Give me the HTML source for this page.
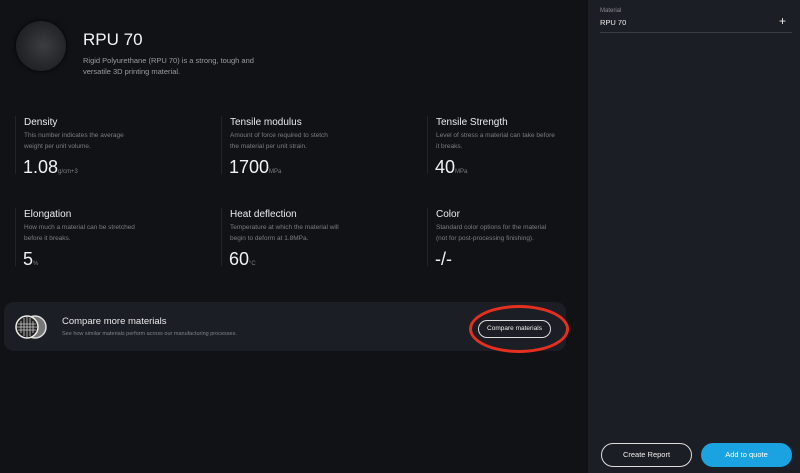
<!DOCTYPE html>
<html><head><style>
*{margin:0;padding:0;box-sizing:border-box}
body{width:800px;height:473px;background:#111216;font-family:"Liberation Sans",sans-serif;color:#e8e8ea;position:relative;overflow:hidden}
.a{position:absolute}
.sph{left:16px;top:21px;width:50px;height:50px;border-radius:50%;background:radial-gradient(circle at 55% 50%,#3c3d40,#26272a 55%,#18191b);box-shadow:0 0 4px #000}
.t{font-size:10px;color:#ececee}
.d{font-size:6.5px;color:#7a7d83;line-height:11px}
.v{font-size:18px;color:#f2f2f4;font-weight:300}
.v small{font-size:6px;color:#7a7d83}
.ln{width:1px;background:#222429}
</style></head><body>
<div class="a sph"></div>
<div class="a" style="left:83px;top:30px;font-size:17px;color:#f4f4f6">RPU 70</div>
<div class="a" style="left:83px;top:55px;font-size:7.5px;color:#9a9ca2;line-height:11px">Rigid Polyurethane (RPU 70) is a strong, tough and<br>versatile 3D printing material.</div>

<div class="a ln" style="left:15px;top:116px;height:58px"></div>
<div class="a ln" style="left:221px;top:116px;height:58px"></div>
<div class="a ln" style="left:427px;top:116px;height:58px"></div>
<div class="a ln" style="left:15px;top:208px;height:58px"></div>
<div class="a ln" style="left:221px;top:208px;height:58px"></div>
<div class="a ln" style="left:427px;top:208px;height:58px"></div>

<div class="a t" style="left:24px;top:117px">Density</div>
<div class="a d" style="left:24px;top:130px">This number indicates the average<br>weight per unit volume.</div>
<div class="a v" style="left:23px;top:157px">1.08<small>g/cm+3</small></div>
<div class="a t" style="left:230px;top:117px">Tensile modulus</div>
<div class="a d" style="left:230px;top:130px">Amount of force required to stetch<br>the material per unit strain.</div>
<div class="a v" style="left:229px;top:157px">1700<small>MPa</small></div>
<div class="a t" style="left:436px;top:117px">Tensile Strength</div>
<div class="a d" style="left:436px;top:130px">Level of stress a material can take before<br>it breaks.</div>
<div class="a v" style="left:435px;top:157px">40<small>MPa</small></div>

<div class="a t" style="left:24px;top:209px">Elongation</div>
<div class="a d" style="left:24px;top:222px">How much a material can be stretched<br>before it breaks.</div>
<div class="a v" style="left:23px;top:249px">5<small>%</small></div>
<div class="a t" style="left:230px;top:209px">Heat deflection</div>
<div class="a d" style="left:230px;top:222px">Temperature at which the material will<br>begin to deform at 1.8MPa.</div>
<div class="a v" style="left:229px;top:249px">60<small>°C</small></div>
<div class="a t" style="left:436px;top:209px">Color</div>
<div class="a d" style="left:436px;top:222px">Standard color options for the material<br>(not for post-processing finishing).</div>
<div class="a v" style="left:435px;top:249px">-/-</div>

<div class="a" style="left:4px;top:302px;width:562px;height:49px;background:#1b1e24;border-radius:10px"></div>
<svg class="a" style="left:14px;top:314px" width="34" height="26"><circle cx="21" cy="13" r="11" fill="#777" stroke="#ddd" stroke-width="1.5"/><circle cx="13" cy="13" r="11" fill="#222" stroke="#eee" stroke-width="1.5"/><g stroke="#ccc" stroke-width=".8"><path d="M7 7v12M10 4v18M13 3v20M16 4v18M19 7v12M4 10h18M3 13h20M4 16h18"/></g></svg>
<div class="a" style="left:62px;top:316px;font-size:9.5px;color:#e8e8ea">Compare more materials</div>
<div class="a" style="left:62px;top:331px;font-size:5.5px;color:#80838a">See how similar materials perform across our manufacturing processes.</div>
<div class="a" style="left:478px;top:320px;width:73px;height:18px;border:1px solid #ddd;border-radius:9px;font-size:6.5px;color:#eee;text-align:center;line-height:16px">Compare materials</div>
<div class="a" style="left:469px;top:305px;width:100px;height:48px;border:3px solid #e53020;border-radius:50%"></div>

<div class="a" style="left:588px;top:0;width:212px;height:473px;background:#1b1e24"></div>
<div class="a" style="left:600px;top:8px;font-size:6px;color:#8a8c92">Material</div>
<div class="a" style="left:600px;top:18px;font-size:7.5px;color:#eee">RPU 70</div>
<div class="a" style="left:779px;top:14px;font-size:12px;color:#eee">+</div>
<div class="a" style="left:600px;top:32px;width:192px;height:1px;background:#3a3d44"></div>
<div class="a" style="left:601px;top:443px;width:91px;height:24px;border:1px solid #ddd;border-radius:12px;font-size:7.5px;color:#eee;text-align:center;line-height:22px">Create Report</div>
<div class="a" style="left:701px;top:443px;width:91px;height:24px;background:#1aa3e0;border-radius:12px;font-size:7.5px;color:#fff;text-align:center;line-height:24px">Add to quote</div>
</body></html>
